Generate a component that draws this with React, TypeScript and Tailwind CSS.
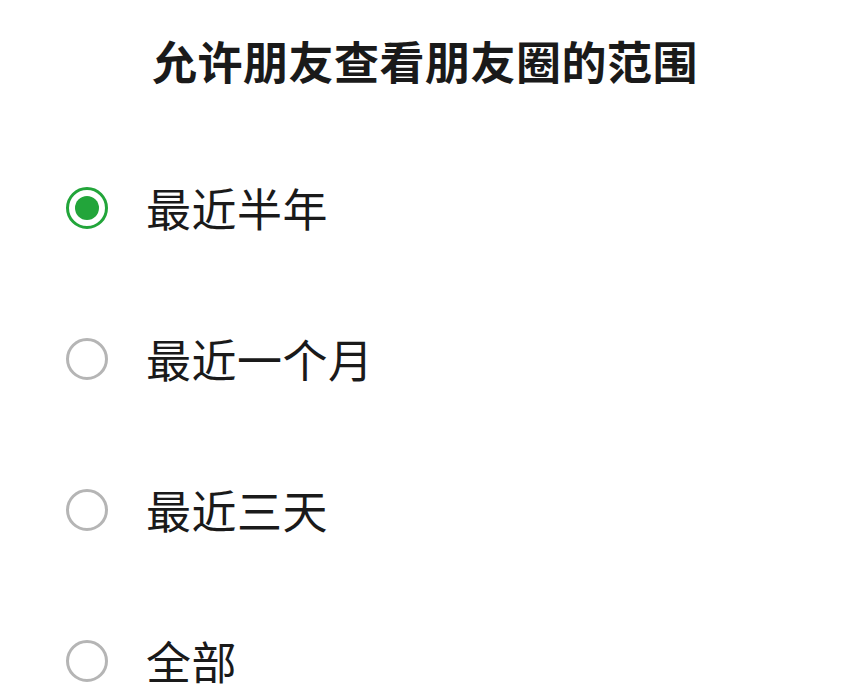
import React, { useState } from 'react';

const options = ['最近半年', '最近一个月', '最近三天', '全部'];

const App: React.FC = () => {
    const [selected, setSelected] = useState(0);

    return (
        <div
            className="w-[850px] h-[699px] bg-white overflow-hidden text-[#1a1a1a]"
            style={{ fontFamily: '"Noto Sans CJK SC", "Noto Sans", sans-serif' }}
        >
            {/* Title */}
            <div className="h-[120px] flex items-center justify-center">
                <h1 className="text-[45px] font-bold leading-none tracking-[0.5px]">允许朋友查看朋友圈的范围</h1>
            </div>

            {/* Options */}
            <div className="mt-[12px] flex flex-col">
                {options.map((opt, i) => (
                    <button
                        key={opt}
                        onClick={() => setSelected(i)}
                        className="h-[151px] flex items-center pl-[66px] gap-[38px] text-left"
                    >
                        {selected === i ? (
                            <span className="w-[42px] h-[42px] rounded-full border-[3px] border-[#22a53a] flex items-center justify-center">
                                <span className="w-[24px] h-[24px] rounded-full bg-[#22a53a]"></span>
                            </span>
                        ) : (
                            <span className="w-[42px] h-[42px] rounded-full border-[3px] border-[#b5b5b5]"></span>
                        )}
                        <span className="text-[45px] leading-none tracking-[0.5px]">{opt}</span>
                    </button>
                ))}
            </div>
        </div>
    );
};

export default App;
